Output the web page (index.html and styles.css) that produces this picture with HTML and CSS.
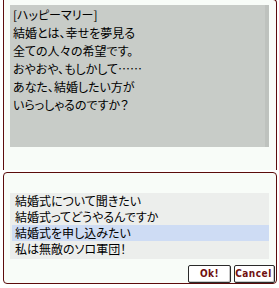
FILE: index.html
```html
<!DOCTYPE html>
<html lang="ja">
<head>
  <meta charset="UTF-8">
  <meta name="viewport" content="width=device-width, initial-scale=1.0">
  <title>ハッピーマリー</title>
  <link rel="stylesheet" href="styles.css">
</head>
<body>
  <div class="screen">
    <div class="window talk">
      <div class="talk-box">
        <p class="talk-text">[ハッピーマリー]<br>結婚とは、幸せを夢見る<br>全ての人々の希望です。<br>おやおや、もしかして……<br>あなた、結婚したい方が<br>いらっしゃるのですか？</p>
      </div>
    </div>

    <div class="window menu">
      <ul class="choices">
        <li>結婚式について聞きたい</li>
        <li>結婚式ってどうやるんですか</li>
        <li class="selected">結婚式を申し込みたい</li>
        <li>私は無敵のソロ軍団！</li>
      </ul>
      <div class="actions">
        <button class="btn btn-ok">Ok!</button>
        <button class="btn btn-cancel">Cancel</button>
      </div>
    </div>
  </div>
</body>
</html>
```

FILE: styles.css
```css
body {
  margin: 0;
  padding: 0;
  background-color: #fff;
  font-family: "Noto Sans CJK JP", sans-serif;
  color: #000;
}

.screen {
  width: 279px;
  height: 288px;
  overflow: hidden;
  display: flex;
  flex-direction: column;
  gap: 2px;
  padding-left: 3px;
  box-sizing: border-box;
}

.window {
  width: 274px;
  box-sizing: border-box;
  border: 1px solid #5c0c0c;
  background-color: #f8fcf8;
}

.talk {
  height: 171px;
  margin-top: -1px;
  border-bottom: none;
  border-radius: 0 4px 0 0;
  padding: 5px 7px 0 6px;
}

.talk-box {
  height: 141px;
  background-color: #c8ccc8;
  border-right: 4px solid #bec2be;
  padding: 1px 0 0 3px;
}

.talk-text {
  margin: 0;
  font-size: 12px;
  line-height: 18px;
  font-feature-settings: "palt";
  white-space: nowrap;
}

.menu {
  height: 112px;
  border-radius: 4px;
  padding: 20px 7px 0 6px;
}

.choices {
  list-style: none;
  margin: 0;
  padding: 0 0 2px 2px;
  height: 66px;
  box-sizing: border-box;
  background-color: #eceeec;
}

.choices li {
  height: 16px;
  line-height: 16px;
  padding-left: 3px;
  font-size: 12px;
  font-feature-settings: "palt";
  white-space: nowrap;
}

.choices li.selected {
  background-color: #cedcf4;
}

.actions {
  display: flex;
  justify-content: flex-end;
  gap: 3px;
  margin: 6px -6px 0 0;
}

.btn {
  height: 18px;
  padding: 0;
  border: 1px solid #2a2a2a;
  border-radius: 2px;
  background-color: #fff;
  box-shadow: inset -1px -1px 0 #c8c8c8;
  font-family: "DejaVu Sans Condensed", "DejaVu Sans", sans-serif;
  font-size: 10px;
  font-weight: bold;
  letter-spacing: 0.5px;
  color: #701010;
  text-align: center;
  line-height: 16px;
}

.btn-ok {
  width: 43px;
}

.btn-cancel {
  width: 41px;
  padding-right: 2px;
}
```
